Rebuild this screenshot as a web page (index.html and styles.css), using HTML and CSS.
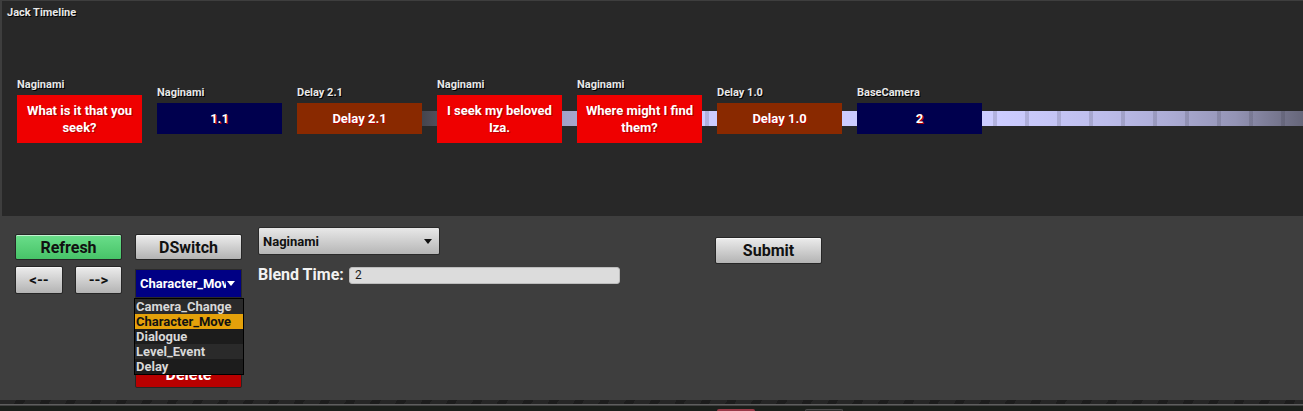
FILE: index.html
```html
<!DOCTYPE html>
<html lang="en">
<head>
    <meta charset="UTF-8">
    <meta name="viewport" content="width=device-width, initial-scale=1.0">
    <title>Jack Timeline</title>
    <link rel="stylesheet" href="styles.css">
</head>
<body>
    <!-- timeline panel -->
    <div class="timeline">
        <div class="timeline-title">Jack Timeline</div>
        <div class="lane">
            <div class="track"></div>
            <div class="events">
                <div class="event">
                    <div class="event-label">Naginami</div>
                    <div class="event-box dialogue">What is it that you seek?</div>
                </div>
                <div class="event">
                    <div class="event-label">Naginami</div>
                    <div class="event-box camera">1.1</div>
                </div>
                <div class="event">
                    <div class="event-label">Delay 2.1</div>
                    <div class="event-box delay">Delay 2.1</div>
                </div>
                <div class="event">
                    <div class="event-label">Naginami</div>
                    <div class="event-box dialogue">I seek my beloved Iza.</div>
                </div>
                <div class="event">
                    <div class="event-label">Naginami</div>
                    <div class="event-box dialogue">Where might I find them?</div>
                </div>
                <div class="event">
                    <div class="event-label">Delay 1.0</div>
                    <div class="event-box delay">Delay 1.0</div>
                </div>
                <div class="event">
                    <div class="event-label">BaseCamera</div>
                    <div class="event-box camera">2</div>
                </div>
            </div>
        </div>
    </div>

    <!-- editing controls -->
    <div class="controls">
        <div class="nav-col">
            <button class="btn btn-green">Refresh</button>
            <div class="nav-row">
                <button class="btn btn-prev">&lt;--</button>
                <button class="btn btn-next">--&gt;</button>
            </div>
        </div>

        <div class="type-col">
            <button class="btn">DSwitch</button>
            <div class="type-select">
                <div class="combo combo-blue">
                    <span class="combo-text">Character_Move</span>
                    <span class="caret"></span>
                </div>
                <!-- open dropdown -->
                <ul class="type-list">
                    <li>Camera_Change</li>
                    <li class="selected">Character_Move</li>
                    <li>Dialogue</li>
                    <li>Level_Event</li>
                    <li>Delay</li>
                </ul>
            </div>
            <button class="btn btn-red">Delete</button>
        </div>

        <div class="props-col">
            <div class="combo combo-gray">
                <span class="combo-text">Naginami</span>
                <span class="caret"></span>
            </div>
            <div class="blend-row">
                <label for="blend-time">Blend Time:</label>
                <input type="text" id="blend-time" value="2">
            </div>
        </div>

        <div class="submit-col">
            <button class="btn btn-submit">Submit</button>
        </div>
    </div>

    <!-- bottom dock -->
    <div class="dock">
        <div class="dock-stripes"></div>
        <div class="dock-line"></div>
        <div class="dock-bar">
            <span class="dock-tab red"></span>
            <span class="dock-tab gray"></span>
        </div>
    </div>
</body>
</html>
```

FILE: styles.css
```css
* {
    box-sizing: border-box;
}

body {
    margin: 0;
    background-color: #3e3e3e;
    font-family: Roboto, "Liberation Sans", sans-serif;
    color: #fff;
    overflow: hidden;
}

/* timeline panel */
.timeline {
    margin: 1px 0 0 2px;
    height: 215px;
    background-color: #282828;
    display: flex;
    flex-direction: column;
}

.timeline-title {
    padding: 5px 0 0 5px;
    font-size: 11px;
    line-height: 13px;
    font-weight: 700;
    color: #e8e8e8;
    text-shadow: 1px 1px 0 #000;
}

.lane {
    height: 182px;
    display: grid;
}

.track,
.events {
    grid-area: 1 / 1;
}

/* strip behind the events, fading at both ends */
.track {
    align-self: center;
    height: 15px;
    margin: 17px 0 0 295px;
    background:
        repeating-linear-gradient(90deg, transparent 0 24px, rgba(40, 40, 52, 0.16) 24px 28px, transparent 28px 32px),
        linear-gradient(90deg,
            rgba(204, 204, 255, 0) 0,
            rgba(204, 204, 255, 0.06) 100px,
            rgba(204, 204, 255, 0.21) 133px,
            rgba(204, 204, 255, 0.75) 268px,
            rgba(204, 204, 255, 1) 403px,
            rgba(204, 204, 255, 1) 703px,
            rgba(204, 204, 255, 0.97) 743px,
            rgba(204, 204, 255, 0.9) 810px,
            rgba(204, 204, 255, 0.8) 874px,
            rgba(204, 204, 255, 0.66) 938px,
            rgba(204, 204, 255, 0.52) 970px,
            rgba(204, 204, 255, 0.38) 1006px);
}

.events {
    display: flex;
    align-items: center;
    gap: 15px;
    padding-left: 15px;
}

.event {
    width: 125px;
    display: flex;
    flex-direction: column;
}

.event-label {
    margin-bottom: 4px;
    font-size: 11px;
    line-height: 13px;
    font-weight: 700;
    color: #e8e8e8;
    text-shadow: 1px 1px 0 #000;
    white-space: nowrap;
}

.event-box {
    padding: 7px 6px;
    font-size: 13px;
    line-height: 17px;
    font-weight: 700;
    text-align: center;
    color: #fff;
    text-shadow: 1px 1px 0 #b00000;
}

.dialogue {
    background-color: #ef0000;
}

.camera {
    background-color: #00004e;
}

.delay {
    background-color: #892900;
}

/* controls */
.controls {
    height: 184px;
    display: flex;
    align-items: flex-start;
    padding: 11px 0 0 15px;
}

.btn {
    display: flex;
    align-items: center;
    justify-content: center;
    padding: 0;
    height: 26px;
    border: 1px solid #262626;
    border-radius: 2px;
    background: linear-gradient(#ececec, #b3b3b3);
    box-shadow: inset 0 1px 0 rgba(255, 255, 255, 0.6);
    font-family: Roboto, "Liberation Sans", sans-serif;
    font-size: 16px;
    font-weight: 700;
    color: #111;
}

.btn-green {
    background: linear-gradient(#6ade8a, #47c368);
}

.nav-col {
    width: 107px;
    margin-top: 7px;
    display: flex;
    flex-direction: column;
    gap: 6px;
}

.nav-row {
    display: flex;
    justify-content: space-between;
}

.nav-row .btn {
    height: 28px;
    font-size: 15px;
}

.btn-prev {
    width: 48px;
}

.btn-next {
    width: 47px;
}

.type-col {
    width: 107px;
    margin: 7px 0 0 13px;
    display: flex;
    flex-direction: column;
}

.type-select {
    position: relative;
    margin-top: 9px;
}

.combo {
    display: flex;
    align-items: center;
    border: 1px solid #2a2a2a;
    font-size: 13px;
    font-weight: 700;
}

.combo-text {
    flex: 1;
    overflow: hidden;
    white-space: nowrap;
}

.caret {
    width: 0;
    height: 0;
    border-left: 4px solid transparent;
    border-right: 4px solid transparent;
    border-top: 5px solid currentColor;
}

.combo-blue {
    height: 29px;
    padding: 0 6px 0 4px;
    background-color: #000084;
    color: #fff;
}

.combo-blue .combo-text {
    margin-right: 1px;
}

.type-list {
    position: absolute;
    top: 100%;
    left: -1px;
    width: 110px;
    margin: 0;
    padding: 0;
    list-style: none;
    border: 1px solid #000;
    background-color: #1c1c1c;
    z-index: 2;
}

.type-list li {
    height: 15px;
    padding-left: 1px;
    font-size: 13px;
    line-height: 15px;
    font-weight: 700;
    color: #d8d8d8;
    white-space: nowrap;
}

.type-list li:nth-child(odd) {
    background-color: #1c1c1c;
}

.type-list li:nth-child(1),
.type-list li:nth-child(4) {
    background-color: #2a2a2a;
}

.type-list li.selected {
    background-color: #e4a10a;
    color: #111;
}

.btn-red {
    margin-top: 62px;
    height: 28px;
    background: #b80000;
    box-shadow: none;
    color: #fff;
}

.props-col {
    width: 362px;
    margin-left: 16px;
}

.combo-gray {
    width: 182px;
    height: 28px;
    padding: 0 7px 0 4px;
    border-radius: 2px;
    background: linear-gradient(#e8e8e8, #b6b6b6);
    color: #111;
}

.blend-row {
    display: flex;
    align-items: center;
    margin-top: 10px;
}

.blend-row label {
    width: 91px;
    font-size: 16px;
    line-height: 20px;
    font-weight: 700;
    color: #f2f2f2;
}

.blend-row input {
    flex: 1;
    height: 17px;
    padding: 0 5px;
    border: 1px solid #bcbcbc;
    border-radius: 3px;
    background-color: #dcdcdc;
    font-family: Roboto, "Liberation Sans", sans-serif;
    font-size: 12px;
    color: #1a1a1a;
}

.submit-col {
    margin: 10px 0 0 95px;
}

.btn-submit {
    width: 107px;
    height: 27px;
}

/* bottom dock */
.dock-stripes {
    height: 4px;
    background: repeating-linear-gradient(120deg, #262626 0 14px, #1c1c1c 14px 22px);
}

.dock-line {
    height: 2px;
    background: linear-gradient(#5e5e5e 50%, #414141 50%);
}

.dock-bar {
    height: 5px;
    display: flex;
    align-items: flex-end;
    background-color: #1b1f1b;
}

.dock-tab {
    width: 38px;
    height: 2px;
    border-radius: 2px 2px 0 0;
}

.dock-tab.red {
    margin-left: 717px;
    background-color: #9a3a48;
}

.dock-tab.gray {
    margin-left: 50px;
    background-color: #2e2e2e;
    border: 1px solid #4a4a4a;
    border-bottom: none;
}
```
